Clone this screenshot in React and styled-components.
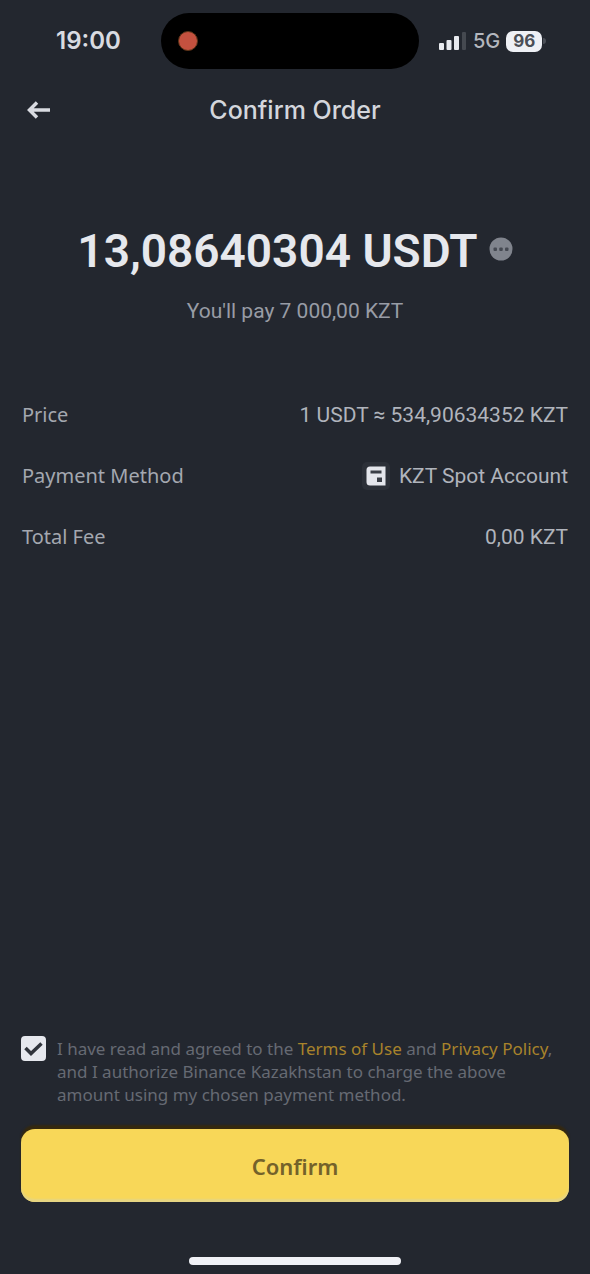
import React, { useState } from 'react';
import styled, { createGlobalStyle } from 'styled-components';

const GlobalStyle = createGlobalStyle`
  * {
    box-sizing: border-box;
  }
  body {
    margin: 0;
    background-color: #23272f;
    font-family: "Noto Sans", "Open Sans", sans-serif;
  }
`;

const Screen = styled.div`
  min-height: 100vh;
  display: flex;
  flex-direction: column;
  background-color: #23272f;
  color: #b5b9c1;
`;

const StatusBar = styled.div`
  display: grid;
  grid-template-columns: 1fr 258px 1fr;
  align-items: center;
  padding: 13px 10px 0 0;
  font-family: Inter, sans-serif;
`;

const Time = styled.div`
  padding-left: 56px;
  font-size: 24px;
  line-height: 28px;
  font-weight: 600;
  color: #d9dbe1;
`;

const Island = styled.div`
  height: 56px;
  border-radius: 28px;
  background-color: #000;
  display: flex;
  align-items: center;
  padding-left: 17px;
`;

const RecordDot = styled.span`
  width: 20px;
  height: 20px;
  border-radius: 50%;
  background-color: #c4513f;
  border: 1px solid #5c3417;
`;

const Signals = styled.div`
  display: flex;
  align-items: center;
  gap: 6px;
  padding-left: 20px;
  font-size: 20px;
  line-height: 28px;
  font-weight: 500;
  color: #b4b7be;
`;

const Battery = styled.span`
  display: flex;
  align-items: center;
  gap: 1px;
`;

const BatteryLevel = styled.span`
  width: 36px;
  height: 21px;
  border-radius: 7px;
  background-color: #eef0f5;
  color: #4a4e56;
  font-size: 17px;
  line-height: 21px;
  font-weight: 700;
  text-align: center;
`;

const BatteryTip = styled.span`
  width: 3px;
  height: 6px;
  border-radius: 0 3px 3px 0;
  background-color: #4b4f57;
`;

const Header = styled.header`
  display: grid;
  grid-template-columns: 1fr auto 1fr;
  align-items: center;
  height: 82px;
  padding: 0 22px;
`;

const BackButton = styled.button`
  justify-self: start;
  display: flex;
  padding: 4px;
  border: 0;
  background: none;
  color: #d9dbe1;
  cursor: pointer;
`;

const Title = styled.h1`
  margin: 0;
  font-family: Inter, sans-serif;
  font-size: 25px;
  line-height: 32px;
  font-weight: 500;
  color: #d3d6dc;
`;

const Summary = styled.section`
  display: flex;
  flex-direction: column;
  align-items: center;
  padding: 68px 22px 0;
`;

const AmountLine = styled.div`
  display: flex;
  align-items: center;
  gap: 11px;
`;

const Amount = styled.div`
  font-family: Roboto, sans-serif;
  font-size: 46px;
  line-height: 64px;
  font-weight: 600;
  color: #e6e8ed;
`;

const MoreButton = styled.button`
  display: flex;
  padding: 0 0 4px;
  border: 0;
  background: none;
  cursor: pointer;
`;

const PayText = styled.p`
  margin: 14px 0 0;
  font-family: Roboto, sans-serif;
  font-size: 21px;
  line-height: 28px;
  color: #989ca5;
`;

const Details = styled.dl`
  margin: 76px 0 0;
  padding: 0 22px;
  display: flex;
  flex-direction: column;
  gap: 33px;
`;

const DetailRow = styled.div`
  display: flex;
  justify-content: space-between;
  align-items: center;
  line-height: 28px;
`;

const DetailLabel = styled.dt`
  font-size: 20px;
  color: #a4a8b0;
`;

const DetailValue = styled.dd`
  margin: 0;
  display: flex;
  align-items: center;
  gap: 9px;
  font-family: Roboto, sans-serif;
  font-size: 21px;
  color: #b0b4bc;
`;

const AccountIcon = styled.span`
  display: flex;
  padding: 4px;
  border-radius: 5px;
  background-color: #2c3038;
`;

const Footer = styled.footer`
  margin-top: auto;
  padding: 0 21px 9px;
  display: flex;
  flex-direction: column;
`;

const Agreement = styled.div`
  display: flex;
  align-items: flex-start;
  gap: 11px;
`;

const Checkbox = styled.input`
  appearance: none;
  flex: none;
  width: 25px;
  height: 25px;
  margin: 0;
  border: 2px solid #e6e8ee;
  border-radius: 4px;
  cursor: pointer;
  &:checked {
    background: #e6e8ee url("data:image/svg+xml,%3Csvg xmlns='http://www.w3.org/2000/svg' viewBox='0 0 21 21'%3E%3Cpath d='M2.500 10l5.500 5.500L18.500 5.500' fill='none' stroke='%2330343c' stroke-width='3.500'/%3E%3C/svg%3E") center / 21px no-repeat;
  }
`;

const AgreementText = styled.label`
  padding-top: 1px;
  font-size: 17px;
  line-height: 23px;
  color: #666a73;
`;

const Link = styled.a`
  color: #a8832b;
  text-decoration: none;
`;

const ConfirmButton = styled.button`
  margin-top: 23px;
  height: 73px;
  border: 0;
  border-radius: 14px;
  background-color: #f8d758;
  box-shadow: 0 -4px 2px #35290f, inset 0 -3px 2px #e6d583;
  font-family: inherit;
  font-size: 22px;
  font-weight: 600;
  color: #74622a;
  cursor: pointer;
`;

const HomeIndicator = styled.div`
  align-self: center;
  margin-top: 55px;
  width: 212px;
  height: 8px;
  border-radius: 4px;
  background-color: #f0f1f6;
`;

function SignalIcon() {
  return (
    <svg width="28" height="20" viewBox="0 0 28 20" fill="#e8eaef">
      <rect x="0" y="12" width="5" height="7" rx="1" />
      <rect x="7.5" y="9" width="5" height="10" rx="1" />
      <rect x="15" y="5" width="5" height="14" rx="1" />
      <rect x="23" y="1" width="4" height="18" rx="1" fill="#454950" />
    </svg>
  );
}

function BackIcon() {
  return (
    <svg width="26" height="22" viewBox="0 0 26 22" fill="none" stroke="currentColor" strokeWidth="3.5">
      <path d="M24 11H3M11 3.500L3.500 11l7.500 7.500" />
    </svg>
  );
}

function MoreIcon() {
  return (
    <svg width="24" height="24" viewBox="0 0 24 24">
      <circle cx="12" cy="12" r="11.500" fill="#80848d" />
      <g fill="#454952">
        <rect x="4.500" y="10.500" width="3.500" height="3.500" rx="1" />
        <rect x="10.250" y="10.500" width="3.500" height="3.500" rx="1" />
        <rect x="16" y="10.500" width="3.500" height="3.500" rx="1" />
      </g>
    </svg>
  );
}

function WalletIcon() {
  return (
    <svg width="20" height="20" viewBox="0 0 20 20">
      <path d="M4 0.500H19.500V19.500H4Q0.500 19.500 0.500 16V4Q0.500 0.500 4 0.500Z" fill="#e4e6ec" />
      <path d="M4.500 4.500H15.500V7.500H4.500Z" fill="#3a3e46" />
      <path d="M11 11.500H16V16H11Z" fill="#3a3e46" />
    </svg>
  );
}

function Detail({ label, children }) {
  return (
    <DetailRow>
      <DetailLabel>{label}</DetailLabel>
      <DetailValue>{children}</DetailValue>
    </DetailRow>
  );
}

export default function App() {
  const [agreed, setAgreed] = useState(true);
  return (
    <>
      <GlobalStyle />
      <Screen>
        <StatusBar>
          <Time>19:00</Time>
          <Island>
            <RecordDot />
          </Island>
          <Signals>
            <SignalIcon />
            5G
            <Battery>
              <BatteryLevel>96</BatteryLevel>
              <BatteryTip />
            </Battery>
          </Signals>
        </StatusBar>
        <Header>
          <BackButton aria-label="Back">
            <BackIcon />
          </BackButton>
          <Title>Confirm Order</Title>
        </Header>
        <Summary>
          <AmountLine>
            <Amount>13,08640304 USDT</Amount>
            <MoreButton aria-label="More">
              <MoreIcon />
            </MoreButton>
          </AmountLine>
          <PayText>You'll pay 7 000,00 KZT</PayText>
        </Summary>
        <Details>
          <Detail label="Price">1 USDT ≈ 534,90634352 KZT</Detail>
          <Detail label="Payment Method">
            <AccountIcon>
              <WalletIcon />
            </AccountIcon>
            KZT Spot Account
          </Detail>
          <Detail label="Total Fee">0,00 KZT</Detail>
        </Details>
        <Footer>
          <Agreement>
            <Checkbox
              id="agree"
              type="checkbox"
              checked={agreed}
              onChange={(e) => setAgreed(e.target.checked)}
            />
            <AgreementText htmlFor="agree">
              I have read and agreed to the <Link href="#terms">Terms of Use</Link> and{' '}
              <Link href="#privacy">Privacy Policy</Link>, and I authorize Binance Kazakhstan to
              charge the above amount using my chosen payment method.
            </AgreementText>
          </Agreement>
          <ConfirmButton>Confirm</ConfirmButton>
          <HomeIndicator />
        </Footer>
      </Screen>
    </>
  );
}
